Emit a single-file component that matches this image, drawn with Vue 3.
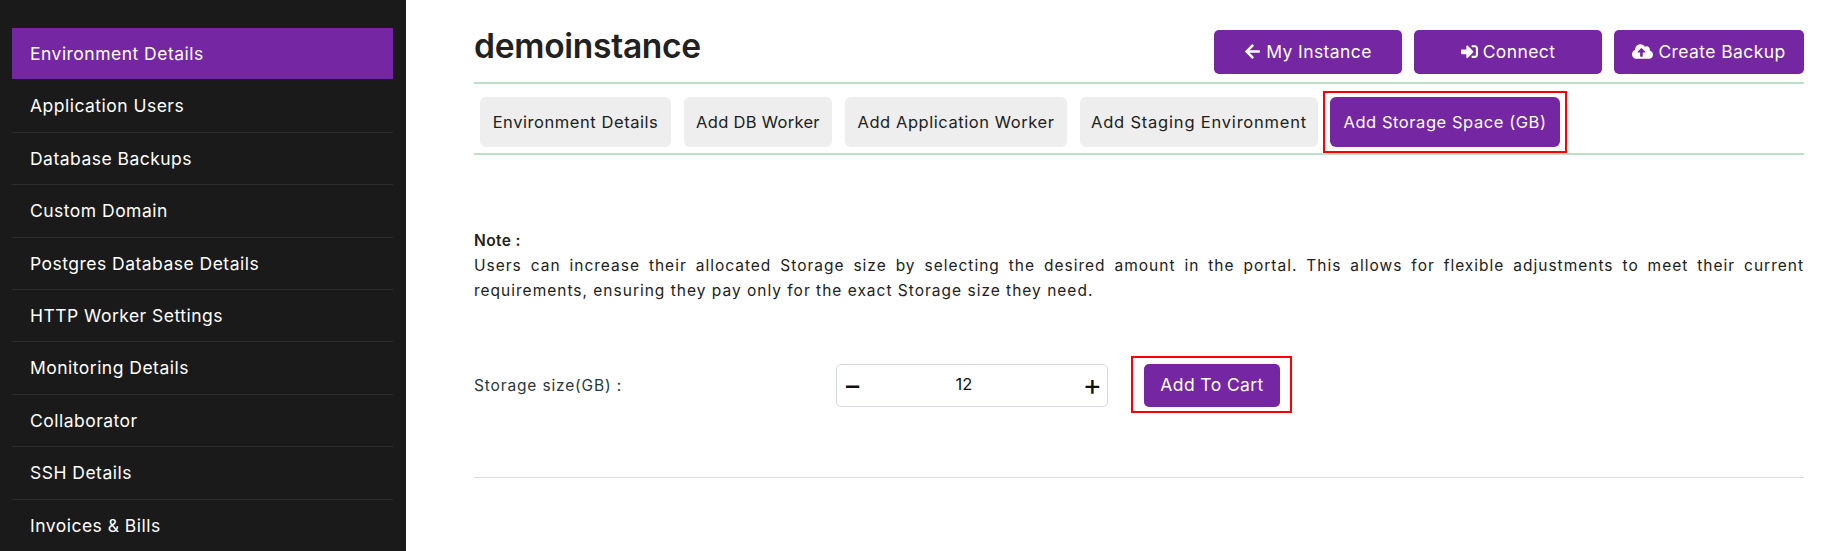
<script setup>
const menu = ['Environment Details','Application Users','Database Backups','Custom Domain','Postgres Database Details','HTTP Worker Settings','Monitoring Details','Collaborator','SSH Details','Invoices & Bills']
const tabs = ['Environment Details','Add DB Worker','Add Application Worker','Add Staging Environment']
</script>

<template>
  <div class="page">
    <aside class="side">
      <ul class="menu">
        <li v-for="(m,i) in menu" :key="m" :class="{active:i===0}">{{ m }}</li>
      </ul>
    </aside>
    <main class="main">
      <header class="head">
        <h1>demoinstance</h1>
        <div class="actions">
          <button class="btn">
            <svg class="ic" viewBox="0 0 448 512"><path d="M257.5 445.1l-22.2 22.2c-9.4 9.4-24.6 9.4-33.9 0L7 273c-9.4-9.4-9.4-24.6 0-33.9L201.4 44.7c9.4-9.4 24.6-9.4 33.9 0l22.2 22.2c9.5 9.5 9.3 25-.4 34.3L136.6 216H424c13.3 0 24 10.7 24 24v32c0 13.3-10.7 24-24 24H136.6l120.5 114.8c9.8 9.3 10 24.8.4 34.3z"/></svg>
            My Instance
          </button>
          <button class="btn">
            <svg class="ic" viewBox="0 0 512 512"><path d="M416 448h-84c-6.6 0-12-5.4-12-12v-40c0-6.6 5.4-12 12-12h84c17.7 0 32-14.3 32-32V160c0-17.7-14.3-32-32-32h-84c-6.6 0-12-5.4-12-12V76c0-6.6 5.4-12 12-12h84c53 0 96 43 96 96v192c0 53-43 96-96 96zm-47-201L201 79c-15-15-41-4.5-41 17v96H24c-13.3 0-24 10.7-24 24v96c0 13.3 10.7 24 24 24h136v96c0 21.5 26 32 41 17l168-168c9.3-9.4 9.3-24.6 0-34z"/></svg>
            Connect
          </button>
          <button class="btn">
            <svg class="ic wide" viewBox="0 0 640 512"><path d="M537.6 226.6c4.1-10.7 6.4-22.4 6.4-34.6 0-53-43-96-96-96-19.7 0-38.1 6-53.3 16.2C367 64.2 315.3 32 256 32c-88.4 0-160 71.6-160 160 0 2.7.1 5.4.2 8.1C40.2 219.8 0 273.2 0 336c0 79.5 64.5 144 144 144h368c70.7 0 128-57.3 128-128 0-61.9-44-113.6-102.4-125.4zM393.4 288H328v112c0 8.8-7.2 16-16 16h-48c-8.8 0-16-7.2-16-16V288h-65.4c-14.3 0-21.4-17.2-11.3-27.3l105.4-105.4c6.2-6.2 16.4-6.2 22.6 0l105.4 105.4c10.1 10.1 2.9 27.3-11.3 27.3z"/></svg>
            Create Backup
          </button>
        </div>
      </header>
      <nav class="tabs">
        <span v-for="t in tabs" :key="t" class="tab">{{ t }}</span>
        <span class="mark"><span class="tab on">Add Storage Space (GB)</span></span>
      </nav>
      <section class="note">
        <strong>Note :</strong>
        <p>Users can increase their allocated Storage size by selecting the desired amount in the portal. This allows for flexible adjustments to meet their current requirements, ensuring they pay only for the exact Storage size they need.</p>
      </section>
      <div class="row">
        <label>Storage size(GB) :</label>
        <div class="stepper">
          <span class="sym">−</span>
          <span class="val">12</span>
          <span class="sym">+</span>
        </div>
        <span class="mark cart"><button class="btn add">Add To Cart</button></span>
      </div>
      <hr class="rule" />
    </main>
  </div>
</template>

<style>
html, body { margin: 0; background: #fff; }
</style>

<style scoped>
.page { display: flex; width: 1828px; height: 551px; overflow: hidden; font-family: Inter, "Noto Sans", sans-serif; background: #fff; }
.side { width: 406px; flex: none; background: #1a1a1a; padding: 28px 13px 0 12px; box-sizing: border-box; }
.menu { list-style: none; margin: 0; padding: 0; }
.menu li { height: 51.4px; line-height: 51px; padding-left: 18px; border-bottom: 1px solid #2c2c2c; color: #fff; font-size: 17.5px; letter-spacing: .48px; }
.menu li.active { background: #7526a3; border-bottom-color: #1a1a1a; }
.main { flex: 1; min-width: 0; padding: 0 24px 0 68px; }
.head { display: flex; justify-content: space-between; height: 82px; }
h1 { margin: 0; padding-top: 23px; font-size: 33.6px; font-weight: 600; color: #212121; line-height: 46px; letter-spacing: -.3px; }
.actions { display: flex; gap: 12px; padding-top: 30px; }
.btn { background: #7526a3; color: #fff; border: 0; border-radius: 5px; font: inherit; font-size: 17.5px; letter-spacing: .4px; height: 44px; width: 188px; display: flex; align-items: center; justify-content: center; gap: 5px; padding: 0 0 1px; }
.actions .btn:last-child { width: 190px; }
.ic { width: 17px; height: 17px; fill: #fff; }
.ic.wide { width: 21px; }
.tabs { display: flex; align-items: flex-start; gap: 13px; border-top: 2px solid #bde0c8; border-bottom: 2px solid #bde0c8; padding: 13px 0 0 6px; box-sizing: border-box; height: 73px; }
.tab { height: 50px; display: flex; align-items: center; justify-content: center; box-sizing: border-box; background: #eee; border-radius: 6px; color: #212121; font-size: 16.5px; letter-spacing: .56px; white-space: nowrap; }
.tab:nth-child(1) { width: 191px; }
.tab:nth-child(2) { width: 148px; letter-spacing: .3px; }
.tab:nth-child(3) { width: 222px; }
.tab:nth-child(4) { width: 238px; letter-spacing: .8px; }
.tab.on { background: #7526a3; color: #fff; width: 230px; }
.mark { display: inline-flex; outline: 2px solid #f00; }
.tabs .mark { margin: -4px 0 0 -6px; padding: 4px 5px; }
.note { margin-top: 72px; font-size: 15.5px; letter-spacing: 1px; line-height: 25.5px; color: #212121; }
.note strong { display: block; padding-top: 1px; margin-bottom: -1px; font-weight: 600; letter-spacing: .4px; }
.note p { margin: 0; text-align: justify; }
.row { display: flex; align-items: flex-start; margin-top: 60px; height: 43px; color: #27383f; }
.row label { width: 362px; font-size: 15.5px; letter-spacing: .85px; line-height: 43px; }
.stepper { width: 272px; height: 43px; box-sizing: border-box; border: 1px solid #d5d8dc; border-radius: 5px; display: flex; align-items: center; justify-content: space-between; padding: 0 5px 2px 6px; color: #111; }
.sym { font-size: 29px; font-weight: 400; line-height: 1; }
.val { font-size: 16.5px; margin-right: 17px; }
.cart { margin: -6px 0 0 25px; padding: 6px 10px 4px 11px; }
.add { width: 136px; height: 43px; }
.rule { border: 0; border-top: 1px solid #ddd; margin: 70px 0 0; }
</style>
